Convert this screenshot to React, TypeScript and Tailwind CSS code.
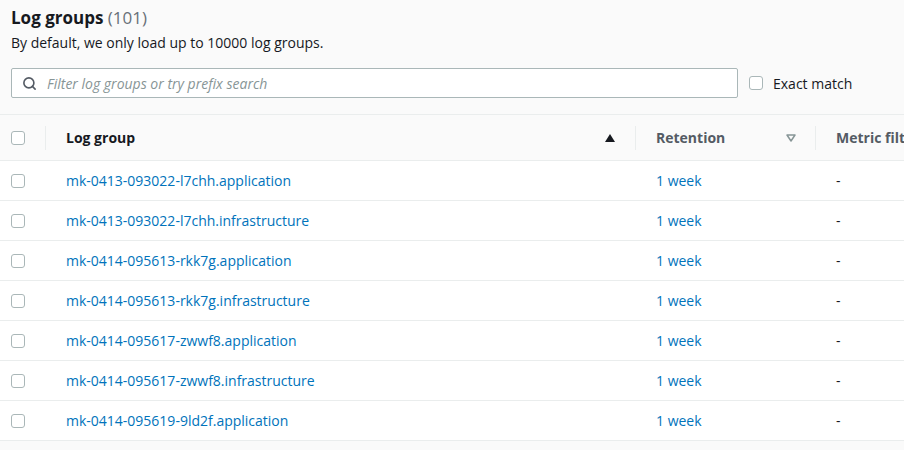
import React from 'react';
import { Search } from 'lucide-react';

const rows = [
    'mk-0413-093022-l7chh.application',
    'mk-0413-093022-l7chh.infrastructure',
    'mk-0414-095613-rkk7g.application',
    'mk-0414-095613-rkk7g.infrastructure',
    'mk-0414-095617-zwwf8.application',
    'mk-0414-095617-zwwf8.infrastructure',
    'mk-0414-095619-9ld2f.application',
];

const Checkbox: React.FC = () => (
    <span className="block w-[14px] h-[14px] rounded-[3px] border border-[#aab7b8] bg-white" />
);

const Divider: React.FC = () => <span className="w-px h-[24px] bg-[#eaeded]" />;

export default function App() {
    return (
        <div className="w-[904px] h-[450px] overflow-hidden bg-[#fafafa] font-['Open_Sans',Arial,sans-serif] text-[14px] text-[#16191f]">
            <div className="px-[11px] pt-[7px]">
                <h1 className="text-[17px] leading-[22px] font-bold">
                    Log groups <span className="font-normal text-[#687078]">(101)</span>
                </h1>
                <p className="mt-[4px] leading-[20px]">By default, we only load up to 10000 log groups.</p>
                <div className="flex items-center mt-[15px]">
                    <div className="w-[727px] h-[30px] shrink-0 flex items-center bg-white border border-[#aab7b8] rounded-[2px] pl-[10px]">
                        <Search className="w-[15px] h-[15px] text-[#545b64]" strokeWidth={2.6} />
                        <span className="ml-[10px] italic text-[#879596]">Filter log groups or try prefix search</span>
                    </div>
                    <div className="flex items-center ml-[11px]">
                        <Checkbox />
                        <span className="ml-[10px]">Exact match</span>
                    </div>
                </div>
            </div>
            <div className="mt-[16px] border-t border-[#eaeded]">
                <div className="h-[46px] flex items-center border-b border-[#eaeded] bg-[#fafafa] font-bold text-[#545b64]">
                    <div className="w-[46px] shrink-0 flex items-center justify-between pl-[11px]">
                        <Checkbox />
                        <Divider />
                    </div>
                    <div className="w-[590px] shrink-0 flex items-center justify-between pl-[20px]">
                        <span className="text-[#16191f]">Log group</span>
                        <div className="flex items-center gap-[20px]">
                            <svg width="10" height="8" viewBox="0 0 10 8"><path d="M5 0 L10 8 L0 8 Z" fill="#16191f" /></svg>
                            <Divider />
                        </div>
                    </div>
                    <div className="w-[180px] shrink-0 flex items-center justify-between pl-[20px]">
                        <span>Retention</span>
                        <div className="flex items-center gap-[19px]">
                            <svg width="10" height="8" viewBox="0 0 10 8"><path d="M1 1 L9 1 L5 7 Z" fill="none" stroke="#879596" strokeWidth="1.5" strokeLinejoin="round" /></svg>
                            <Divider />
                        </div>
                    </div>
                    <div className="pl-[20px] whitespace-nowrap">Metric filters</div>
                </div>
                {rows.map(name => (
                    <div key={name} className="h-[40px] flex items-center border-b border-[#eaeded] bg-white">
                        <div className="w-[46px] shrink-0 pl-[11px]">
                            <Checkbox />
                        </div>
                        <div className="w-[590px] shrink-0 pl-[20px] text-[#0073bb]">{name}</div>
                        <div className="w-[180px] shrink-0 pl-[20px] text-[#0073bb]">1 week</div>
                        <div className="pl-[20px]">-</div>
                    </div>
                ))}
            </div>
        </div>
    );
}
